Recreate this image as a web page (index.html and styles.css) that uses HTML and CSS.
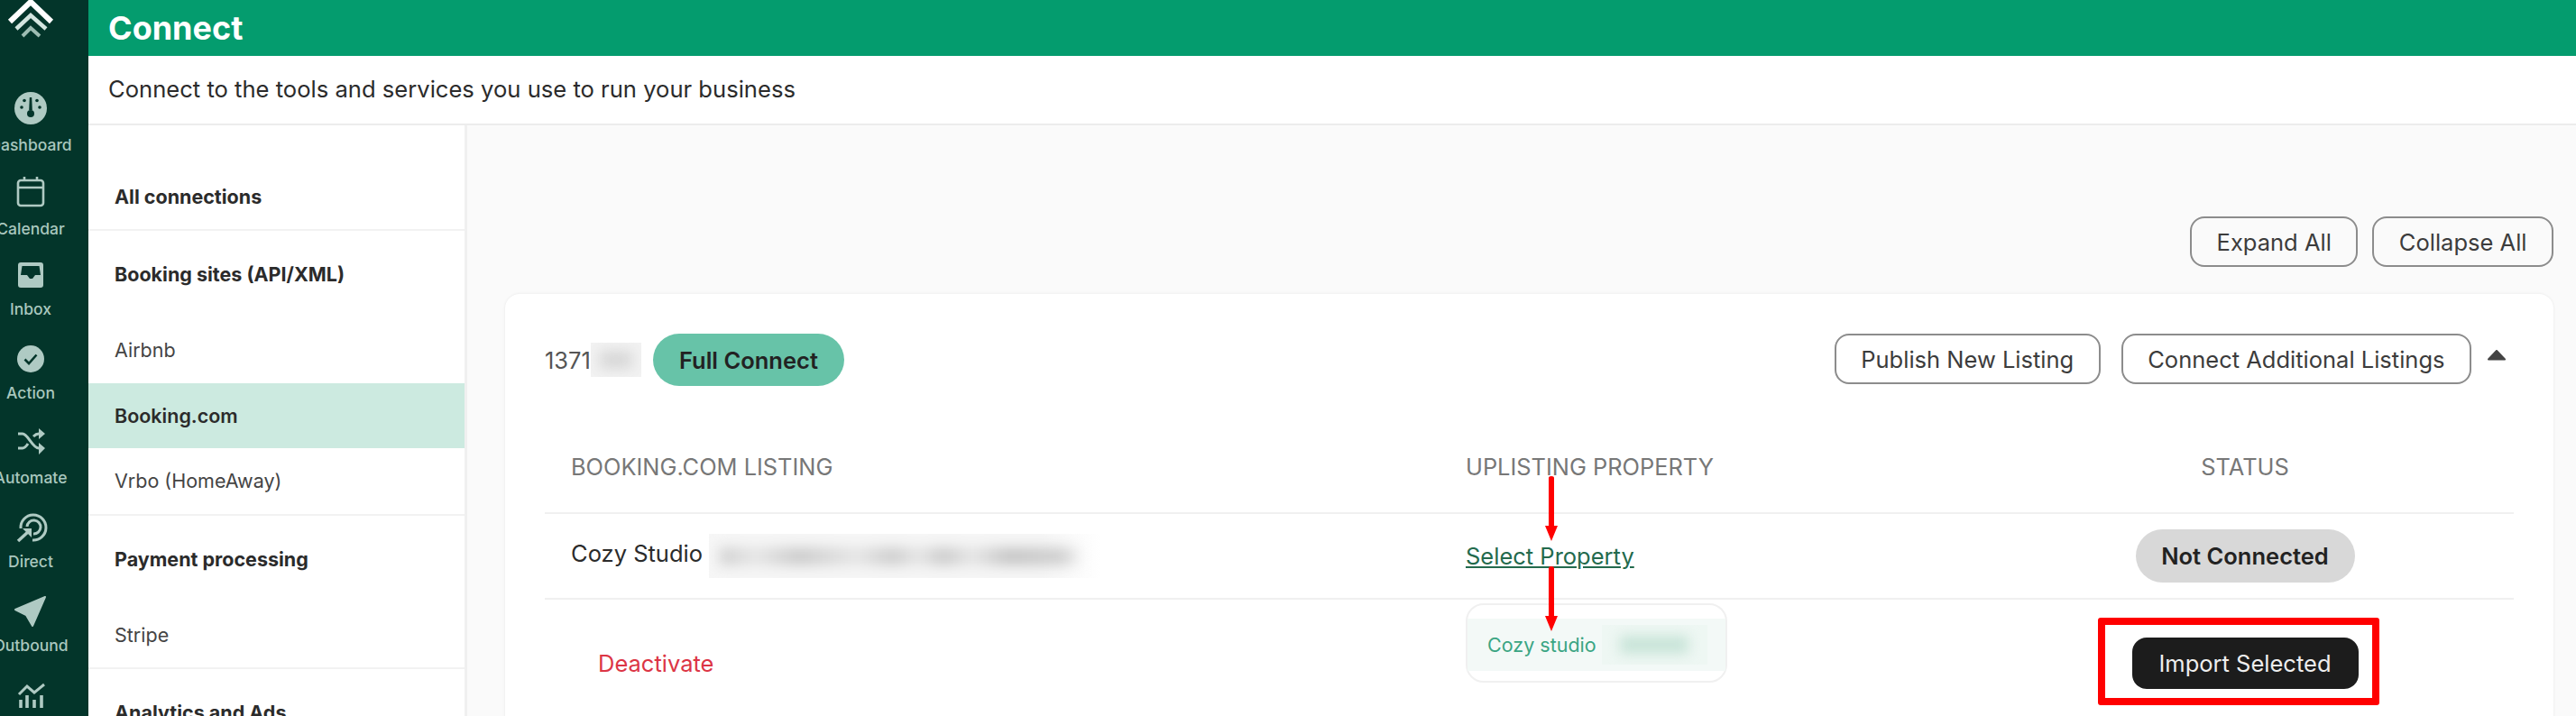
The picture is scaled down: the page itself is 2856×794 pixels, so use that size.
FILE: index.html
```html
<!DOCTYPE html>
<html lang="en">
    <head>
        <meta charset="UTF-8" />
        <title>Connect</title>
        <link rel="stylesheet" href="styles.css">
    </head>
    <body>
        <div class="app">
            <!-- left icon bar -->
            <aside class="sidebar">
                <svg class="logo" viewBox="0 0 68 48">
                    <path d="M11 24 34 2 57 24" fill="none" stroke="#fff" stroke-width="6"/>
                    <path d="M18 32 34 17 51 32" fill="none" stroke="#d3e5df" stroke-width="4.5"/>
                    <path d="M25 40 34 31 44 40" fill="none" stroke="#9dbcb2" stroke-width="4"/>
                </svg>
                <nav class="side-nav">
                    <a class="side-item side-item-low">
                        <svg viewBox="0 0 40 40">
                            <circle cx="20" cy="20" r="18" fill="#afcac3"/>
                            <path d="M18.8 8h2.4l.6 14h-3.600z" fill="#03352a"/>
                            <circle cx="20" cy="26" r="4" fill="#03352a"/>
                            <circle cx="10" cy="19" r="1.800" fill="#03352a"/>
                            <circle cx="13" cy="11.500" r="1.800" fill="#03352a"/>
                            <circle cx="27" cy="11.500" r="1.800" fill="#03352a"/>
                            <circle cx="30" cy="19" r="1.800" fill="#03352a"/>
                        </svg>
                        <span>Dashboard</span>
                    </a>
                    <a class="side-item side-item-low">
                        <svg viewBox="0 0 40 40">
                            <rect x="6" y="7" width="28" height="28" rx="3" fill="none" stroke="#afcac3" stroke-width="2.600"/>
                            <path d="M6 15h28M13 3v5M27 3v5" fill="none" stroke="#afcac3" stroke-width="2.600"/>
                        </svg>
                        <span>Calendar</span>
                    </a>
                    <a class="side-item side-item-up">
                        <svg viewBox="0 0 40 40">
                            <path fill-rule="evenodd" fill="#afcac3" d="M9 6h22a3 3 0 0 1 3 3v22a3 3 0 0 1-3 3H9a3 3 0 0 1-3-3V9a3 3 0 0 1 3-3zm1.500 4L9 20h7l3 4h3l3-4h6l-1.500-10z"/>
                        </svg>
                        <span>Inbox</span>
                    </a>
                    <a class="side-item">
                        <svg viewBox="0 0 40 40">
                            <circle cx="20" cy="20" r="15" fill="#afcac3"/>
                            <path d="M13.500 20.500 18 25l8.500-9.500" fill="none" stroke="#03352a" stroke-width="2.600"/>
                        </svg>
                        <span>Action</span>
                    </a>
                    <a class="side-item">
                        <svg viewBox="0 0 40 40">
                            <path d="M6 9h5c6 0 11 16 18 16h3M6 25h5c2 0 4-2 6-5M23 12c2-2 3-3 6-3h3" fill="none" stroke="#afcac3" stroke-width="3"/>
                            <path d="M29 3l7 6-7 6zM29 19l7 6-7 7z" fill="#afcac3"/>
                        </svg>
                        <span>Automate</span>
                    </a>
                    <a class="side-item">
                        <svg viewBox="0 0 40 40">
                            <path d="M9 21A14 14 0 1 1 22 34" fill="none" stroke="#afcac3" stroke-width="3"/>
                            <path d="M16 19A7.500 7.500 0 1 1 23 27" fill="none" stroke="#afcac3" stroke-width="3"/>
                            <path d="M6 35 18 24" fill="none" stroke="#afcac3" stroke-width="3.500"/>
                            <path d="M11 21h10v10z" fill="#afcac3"/>
                        </svg>
                        <span>Direct</span>
                    </a>
                    <a class="side-item">
                        <svg viewBox="0 0 40 40">
                            <path d="M36 4 3 18l12 6 7 12z" fill="#afcac3" stroke="#afcac3" stroke-linejoin="round" stroke-width="2"/>
                        </svg>
                        <span>Outbound</span>
                    </a>
                    <a class="side-item">
                        <svg viewBox="0 0 40 40">
                            <path d="M7 18 16 9l8 7L35 7" fill="none" stroke="#afcac3" stroke-width="3"/>
                            <path d="M9 24v9M16 19v14M24 24v9M32 19v14" fill="none" stroke="#afcac3" stroke-width="3.600"/>
                        </svg>
                        <span>Analytics</span>
                    </a>
                </nav>
            </aside>

            <main class="main">
                <header class="topbar">
                    <h1>Connect</h1>
                </header>
                <p class="subbar">Connect to the tools and services you use to run your business</p>

                <div class="body">
                    <!-- connection categories -->
                    <nav class="cats">
                        <div class="cat-group">
                            <div class="cat-title cat-title-first">All connections</div>
                        </div>
                        <div class="cat-group">
                            <div class="cat-title">Booking sites (API/XML)</div>
                            <a class="cat-link">Airbnb</a>
                            <a class="cat-link on">Booking.com</a>
                            <a class="cat-link">Vrbo (HomeAway)</a>
                        </div>
                        <div class="cat-group">
                            <div class="cat-title">Payment processing</div>
                            <a class="cat-link">Stripe</a>
                        </div>
                        <div class="cat-group">
                            <div class="cat-title">Analytics and Ads</div>
                        </div>
                    </nav>

                    <section class="content">
                        <div class="tools">
                            <button class="btn">Expand All</button>
                            <button class="btn">Collapse All</button>
                        </div>

                        <div class="card">
                            <div class="card-head">
                                <span class="acc-id">1371</span>
                                <span class="blur blur-id"><i></i></span>
                                <span class="pill pill-green">Full Connect</span>
                                <div class="card-actions">
                                    <button class="btn">Publish New Listing</button>
                                    <button class="btn">Connect Additional Listings</button>
                                    <svg class="caret" viewBox="0 0 20 12">
                                        <path d="M10 1 19 10.500H1z" fill="#444" stroke="#444" stroke-linejoin="round" stroke-width="2"/>
                                    </svg>
                                </div>
                            </div>

                            <div class="listing">
                                <div class="row row-head">
                                    <div class="cell-name">BOOKING.COM LISTING</div>
                                    <div>UPLISTING PROPERTY</div>
                                    <div class="cell-status">STATUS</div>
                                </div>
                                <div class="row row-item">
                                    <div class="cell-name">
                                        Cozy Studio
                                        <span class="blur blur-name"><i></i></span>
                                    </div>
                                    <div><a class="select-link">Select Property</a></div>
                                    <div class="cell-status">
                                        <span class="pill pill-grey">Not Connected</span>
                                    </div>
                                </div>
                                <div class="row row-last">
                                    <div class="deactivate">Deactivate</div>
                                    <div class="picked-box">
                                        <div class="picked">
                                            Cozy studio
                                            <span class="blur blur-picked"><i></i></span>
                                        </div>
                                    </div>
                                    <div class="cell-status">
                                        <div class="mark-box">
                                            <button class="btn-dark">Import Selected</button>
                                        </div>
                                    </div>
                                </div>

                                <!-- red arrows over the table -->
                                <svg class="arrow arrow1" viewBox="0 0 14 72">
                                    <path d="M4 2a3 2 0 0 1 6 0V55h4L7 72 0 55h4z" fill="#f00"/>
                                </svg>
                                <svg class="arrow arrow2" viewBox="0 0 14 72">
                                    <path d="M4 2a3 2 0 0 1 6 0V55h4L7 72 0 55h4z" fill="#f00"/>
                                </svg>
                            </div>
                        </div>
                    </section>
                </div>
            </main>
        </div>
    </body>
</html>
```

FILE: styles.css
```css
html,
body {
    margin: 0px;
    padding: 0px;
    width: 100%;
    height: 100%;
    overflow: hidden;
}

body {
    font-family: Inter, "Liberation Sans", sans-serif;
    color: #2b2b2b;
}

button {
    font-family: inherit;
}

.app {
    display: flex;
    height: 794px;
    overflow: hidden;
}

/* left icon bar */
.sidebar {
    flex: 0 0 98px;
    box-sizing: border-box;
    padding-right: 30px;
    background: #03352a;
    overflow: hidden;
}

.logo {
    display: block;
    width: 68px;
    height: 48px;
}

.side-nav {
    margin-top: 52px;
}

.side-item {
    display: flex;
    flex-direction: column;
    align-items: center;
    width: 68px;
    height: 93.4px;
    color: #a9c7be;
    font-size: 17.5px;
    font-weight: 500;
    line-height: 22px;
    white-space: nowrap;
}

.side-item svg {
    flex: none;
    width: 40px;
    height: 40px;
    margin-bottom: 7px;
}

.side-item-low svg {
    margin-bottom: 10px;
}

.side-item-up {
    margin-top: -2px;
}

/* right part */
.main {
    flex: 1;
    min-width: 0;
}

.topbar {
    display: flex;
    align-items: center;
    height: 62px;
    padding-left: 22px;
    background: #049c6e;
}

.topbar h1 {
    margin: 0px;
    color: #fff;
    font-size: 36px;
    font-weight: 700;
}

.subbar {
    box-sizing: border-box;
    height: 77px;
    margin: 0px;
    padding-left: 22px;
    border-bottom: 2px solid #ececec;
    font-size: 25.6px;
    line-height: 74px;
}

.body {
    display: flex;
}

/* categories */
.cats {
    flex: 0 0 420px;
    box-sizing: border-box;
    height: 655px;
    border-right: 3px solid #f0f0f0;
    background: #fff;
}

.cat-group {
    border-bottom: 2px solid #f2f2f2;
}

.cat-title {
    display: flex;
    align-items: center;
    height: 96px;
    padding-left: 29px;
    font-size: 21.5px;
    font-weight: 700;
}

.cat-title-first {
    height: 73px;
    padding-top: 42px;
}

.cat-link {
    display: flex;
    align-items: center;
    height: 72.5px;
    padding-left: 29px;
    color: #444;
    font-size: 21.5px;
}

.cat-link.on {
    background: #cceae0;
    color: #2b2b2b;
    font-weight: 600;
}

/* content */
.content {
    flex: 1;
    min-width: 0;
    box-sizing: border-box;
    height: 655px;
    padding: 101px 25px 0px 42px;
    background: #fafafa;
}

.tools {
    display: flex;
    justify-content: flex-end;
    gap: 16px;
    margin-bottom: 30px;
}

.btn {
    height: 56px;
    padding: 0px 27.5px;
    border: 2px solid #8c8c8c;
    border-radius: 16px;
    background: #fff;
    color: #3c3c3c;
    font-size: 25.5px;
}

.tools .btn {
    background: #fafafa;
}

.card {
    box-sizing: border-box;
    height: 700px;
    padding: 44px;
    border-radius: 16px;
    background: #fff;
    box-shadow: 0px 0px 3px #e6e6e6;
}

.card-head {
    display: flex;
    align-items: center;
}

.acc-id {
    color: #555;
    font-size: 25.5px;
}

.pill {
    display: inline-flex;
    align-items: center;
    justify-content: center;
    border-radius: 30px;
    color: #222;
    font-size: 25.5px;
    font-weight: 600;
}

.pill-green {
    width: 212px;
    height: 58px;
    margin-left: 13px;
    background: #67c3a8;
}

.pill-grey {
    width: 243px;
    height: 59px;
    background: #d8d8d8;
}

.card-actions {
    display: flex;
    align-items: flex-start;
    gap: 23px;
    margin-left: auto;
    height: 58px;
}

.caret {
    width: 20px;
    height: 12px;
    margin: 18px 9px 0px -5px;
}

/* blurred out parts */
.blur {
    display: inline-flex;
    align-items: center;
    overflow: hidden;
    background: #f6f6f6;
    vertical-align: middle;
}

.blur i {
    display: block;
    height: 20px;
    filter: blur(7px);
}

.blur-id {
    width: 56px;
    height: 38px;
    background: #f2f2f2;
}

.blur-id i {
    width: 36px;
    margin-left: 10px;
    background: #d8d8d8;
}

.blur-name {
    width: 434px;
    height: 49px;
    background: linear-gradient(90deg, #f6f6f6 85%, #fff);
}

.blur-name i {
    width: 400px;
    margin-left: 12px;
    background: linear-gradient(90deg, #cfcfcf, #e6e6e6 10%, #cbcbcb 22%, #e6e6e6 38%, #cdcdcd 48%, #e6e6e6 55%, #cbcbcb 62%, #e6e6e6 70%, #c6c6c6 80%, #d0d0d0 95%, #f6f6f6);
}

.blur-picked {
    width: 117px;
    height: 44px;
    margin-left: 6px;
    background: #eef7f3;
}

.blur-picked i {
    width: 76px;
    margin-left: 20px;
    background: #c8e4d8;
}

/* listing table */
.listing {
    position: relative;
}

.row {
    display: grid;
    grid-template-columns: 1021px 566px 1fr;
    font-size: 25.5px;
}

.row-head {
    padding-top: 78px;
    padding-bottom: 38px;
    border-bottom: 2px solid #f0f0f0;
    color: #777;
    font-size: 25.4px;
    line-height: 24px;
}

.row-item {
    align-items: center;
    height: 93px;
    border-bottom: 2px solid #f0f0f0;
}

.cell-name {
    padding-left: 29px;
}

.cell-status {
    display: flex;
    justify-content: center;
}

.select-link {
    color: #236a4d;
    text-decoration: underline;
}

.deactivate {
    margin-top: 55px;
    padding-left: 59px;
    color: #dc3545;
}

.picked-box {
    box-sizing: border-box;
    width: 290px;
    height: 88px;
    margin-top: 4px;
    padding: 15px 0px;
    border: 2px solid #f0f0f0;
    border-radius: 20px;
}

.picked {
    display: flex;
    align-items: center;
    height: 58px;
    padding-left: 22px;
    background: #f3f9f7;
    color: #3aa583;
    font-size: 21.5px;
}

/* red mark around the button */
.mark-box {
    margin: 20px 15px 0px 0px;
    padding: 14px 15px 10px 30px;
    border: 8px solid #f00;
    border-radius: 3px;
}

.btn-dark {
    display: block;
    width: 251px;
    height: 57px;
    border: none;
    border-radius: 16px;
    background: #1c1c1c;
    color: #eee;
    font-size: 25.5px;
}

.arrow {
    position: absolute;
    left: 1109px;
    width: 14px;
    height: 72px;
}

.arrow1 {
    top: 100px;
}

.arrow2 {
    top: 200px;
}
```
